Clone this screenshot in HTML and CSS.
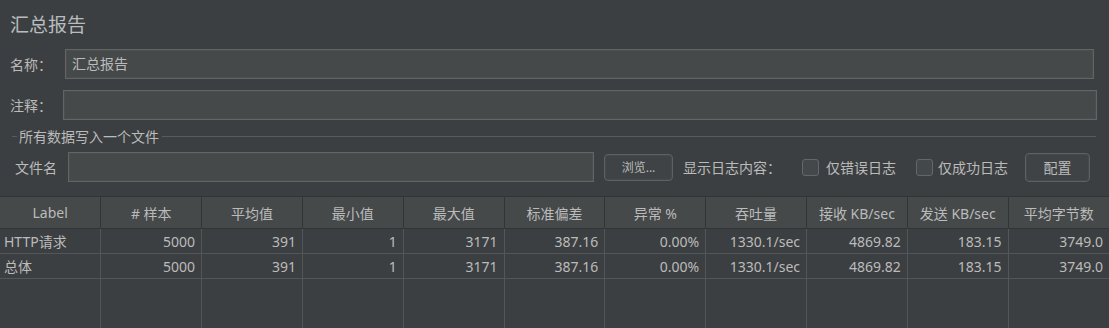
FILE: index.html
```html
<!DOCTYPE html>
<html lang="zh-CN">
<head>
  <meta charset="UTF-8">
  <title>汇总报告</title>
  <link rel="stylesheet" href="styles.css">
</head>
<body>

  <!-- Intestazione del pannello -->
  <h1 class="title">汇总报告</h1>

  <div class="form-row row-name">
    <span class="label">名称：</span>
    <div class="field">汇总报告</div>
  </div>

  <div class="form-row row-comment">
    <span class="label">注释：</span>
    <div class="field"></div>
  </div>

  <!-- Scrittura dei dati su file -->
  <div class="group">
    <div class="group-title">
      <span class="line short"></span>
      <span class="legend">所有数据写入一个文件</span>
      <span class="line"></span>
    </div>
    <div class="file-row">
      <span class="label file-label">文件名</span>
      <div class="field file-field"></div>
      <button class="btn btn-browse">浏览...</button>
      <span class="log-text">显示日志内容：</span>
      <span class="check"></span>
      <span class="check-text">仅错误日志</span>
      <span class="check check-2"></span>
      <span class="check-text">仅成功日志</span>
      <button class="btn btn-config">配置</button>
    </div>
  </div>

  <!-- Tabella dei risultati -->
  <table class="report">
    <thead>
      <tr>
        <th>Label</th>
        <th># 样本</th>
        <th>平均值</th>
        <th>最小值</th>
        <th>最大值</th>
        <th>标准偏差</th>
        <th>异常 %</th>
        <th>吞吐量</th>
        <th>接收 KB/sec</th>
        <th>发送 KB/sec</th>
        <th>平均字节数</th>
      </tr>
    </thead>
    <tbody>
      <tr>
        <td class="name">HTTP请求</td>
        <td>5000</td>
        <td>391</td>
        <td>1</td>
        <td>3171</td>
        <td>387.16</td>
        <td>0.00%</td>
        <td>1330.1/sec</td>
        <td>4869.82</td>
        <td>183.15</td>
        <td>3749.0</td>
      </tr>
      <tr>
        <td class="name">总体</td>
        <td>5000</td>
        <td>391</td>
        <td>1</td>
        <td>3171</td>
        <td>387.16</td>
        <td>0.00%</td>
        <td>1330.1/sec</td>
        <td>4869.82</td>
        <td>183.15</td>
        <td>3749.0</td>
      </tr>
      <tr class="filler">
        <td></td><td></td><td></td><td></td><td></td><td></td><td></td><td></td><td></td><td></td><td></td>
      </tr>
    </tbody>
  </table>

</body>
</html>
```

FILE: styles.css
```css
/* Stili globali */
* { margin: 0; padding: 0; box-sizing: border-box; }
html, body { height: 100%; }
body {
  background-color: #3c3f41;
  color: #bbbbbb;
  font-family: "Noto Sans", "Noto Sans CJK SC", sans-serif;
  font-size: 14px;
  overflow: hidden;
}

.title {
  font-size: 19px;
  font-weight: normal;
  line-height: 26px;
  margin: 12px 0 0 10px;
  color: #b9bcbf;
}

/* Righe del modulo */
.form-row {
  display: flex;
  align-items: center;
  padding-left: 10px;
}
.row-name { margin-top: 11px; padding-right: 15px; }
.row-name .label { width: 55px; }
.row-comment { margin-top: 11px; padding-right: 12px; }
.row-comment .label { width: 53px; }

.field {
  flex: 1;
  height: 30px;
  background-color: #45494a;
  border: 1px solid #646464;
  box-shadow: inset 0 0 0 1px #4a4e4f;
  padding: 0 6px;
  line-height: 28px;
  color: #bbbbbb;
}

/* Gruppo "scrivi su file" */
.group { margin-top: 7px; }
.group-title {
  display: flex;
  align-items: center;
  height: 18px;
  padding: 0 13px 0 12px;
}
.line {
  flex: 1;
  height: 1px;
  background-color: #595c5e;
}
.line.short { flex: 0 0 5px; }
.legend { padding: 0 3px 0 2px; }

.file-row {
  display: flex;
  align-items: center;
  margin-top: 7px;
  padding-left: 15px;
}
.file-label { width: 53px; }
.file-field { flex: 0 0 526px; }

.btn {
  font-family: inherit;
  color: #bbbbbb;
  background-color: #3f4345;
  border: 1px solid #5e6162;
  border-radius: 4px;
  box-shadow: inset 0 0 0 1px #45494a;
}
.btn-browse {
  width: 69px;
  height: 27px;
  margin-left: 10px;
  font-size: 12px;
}
.btn-config {
  width: 65px;
  height: 29px;
  margin-left: 16px;
  font-size: 14px;
}

.log-text { margin-left: 10px; width: 119px; }
.check {
  width: 17px;
  height: 17px;
  border: 1px solid #646768;
  border-radius: 3px;
  background-color: #43494a;
  margin-right: 7px;
}
.check-2 { margin-left: 19px; margin-right: 5px; }
.check-text { width: 71px; }

/* Tabella dei risultati */
.report {
  width: 100%;
  table-layout: fixed;
  border-collapse: collapse;
  margin-top: 14px;
}
.report th {
  height: 32px;
  font-weight: normal;
  background-color: #45494a;
  border-top: 1px solid #323436;
  border-bottom: 1px solid #323436;
  border-right: 1px solid #323436;
  color: #bbbbbb;
  white-space: nowrap;
}
.report th:last-child { border-right: none; }
.report td {
  height: 25px;
  text-align: right;
  padding: 0 6px 0 4px;
  border-right: 1px solid #545759;
  border-bottom: 1px solid #545759;
  white-space: nowrap;
  overflow: hidden;
}
.report td:last-child { border-right: none; }
.report td.name { text-align: left; }
.report .filler td {
  height: 60px;
  border-bottom: none;
}
```
